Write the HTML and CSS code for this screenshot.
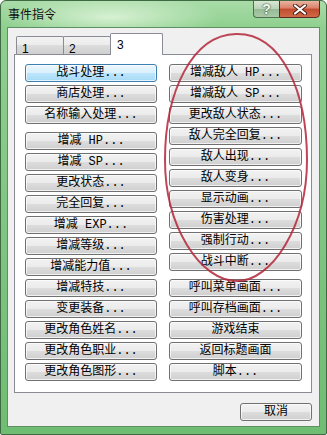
FILE: index.html
```html
<html>
<head>
    <title>事件指令</title>
    <link rel="stylesheet" href="styles.css">
</head>
<body>
    <div class="window">
        <div class="titlebar">
            <div class="title">事件指令</div>
            <div class="caption">
                <div class="cap help">?</div>
                <div class="cap close">
                    <svg width="16" height="11" viewBox="0 0 16 11">
                        <path d="M3 1.5 L13 9.5 M13 1.5 L3 9.5" stroke="#4a2018" stroke-width="4" stroke-linecap="round"/>
                        <path d="M3 1.5 L13 9.5 M13 1.5 L3 9.5" stroke="#ffffff" stroke-width="2.2" stroke-linecap="round"/>
                    </svg>
                </div>
            </div>
        </div>
        <div class="client">
            <div class="tabs">
                <div class="tab">1</div>
                <div class="tab">2</div>
                <div class="tab active">3</div>
            </div>
            <div class="panel">
                <div class="col">
                    <div class="button default">战斗处理...</div>
                    <div class="button">商店处理...</div>
                    <div class="button">名称输入处理...</div>
                    <div class="button sep">增减 HP...</div>
                    <div class="button">增减 SP...</div>
                    <div class="button">更改状态...</div>
                    <div class="button">完全回复...</div>
                    <div class="button">增减 EXP...</div>
                    <div class="button">增减等级...</div>
                    <div class="button">增减能力值...</div>
                    <div class="button">增减特技...</div>
                    <div class="button">变更装备...</div>
                    <div class="button">更改角色姓名...</div>
                    <div class="button">更改角色职业...</div>
                    <div class="button">更改角色图形...</div>
                </div>
                <div class="col wide">
                    <div class="button">增减敌人 HP...</div>
                    <div class="button">增减敌人 SP...</div>
                    <div class="button">更改敌人状态...</div>
                    <div class="button">敌人完全回复...</div>
                    <div class="button">敌人出现...</div>
                    <div class="button">敌人变身...</div>
                    <div class="button">显示动画...</div>
                    <div class="button">伤害处理...</div>
                    <div class="button">强制行动...</div>
                    <div class="button">战斗中断...</div>
                    <div class="button sep">呼叫菜单画面...</div>
                    <div class="button">呼叫存档画面...</div>
                    <div class="button">游戏结束</div>
                    <div class="button">返回标题画面</div>
                    <div class="button">脚本...</div>
                </div>
            </div>
            <div class="footer">
                <div class="button cancel">取消</div>
            </div>
        </div>
        <svg class="mark" width="327" height="435" viewBox="0 0 327 435">
            <path d="M236 34 C282 33 307 92 307 160 C307 226 272 281 237 281 C200 281 165 226 165 160 C165 92 192 35 236 34 Z"
                  fill="none" stroke="#b3263a" stroke-width="2" stroke-opacity="0.85"/>
        </svg>
    </div>
</body>
</html>
```

FILE: styles.css
```css
body {
    margin: 0;
    padding: 0;
    font-family: "Noto Sans CJK SC", sans-serif;
    font-size: 12px;
}
.window {
    position: relative;
    width: 327px;
    height: 435px;
    box-sizing: border-box;
    border: 1px solid #3f6a44;
    border-radius: 6px 6px 2px 2px;
    background:
        radial-gradient(ellipse 110px 22px at 110px 16px, rgba(235, 250, 230, 0.75), rgba(235, 250, 230, 0) 100%),
        linear-gradient(#a9dca8 0px, #8fd08f 26px, #7cc47f 60%, #6fbd73 100%);
    overflow: hidden;
}
.titlebar {
    display: flex;
    height: 26px;
}
.title {
    padding: 5px 0 0 7px;
    line-height: 16px;
    color: #111;
}
.caption {
    display: flex;
    margin-left: auto;
    margin-right: 6px;
    margin-top: -1px;
}
.cap {
    height: 18px;
    box-sizing: border-box;
    display: flex;
    justify-content: center;
    align-items: center;
}
.help {
    width: 26px;
    border: 1px solid #4f6f52;
    border-right: none;
    border-radius: 0 0 0 4px;
    background: linear-gradient(#d9e8d6, #b9d2b7 50%, #97b996 50%, #aacaa8);
    font-family: "Liberation Sans", sans-serif;
    font-size: 14px;
    font-weight: bold;
    color: #f4f8f4;
    text-shadow: 0 0 2px #38503a, 0 0 1px #38503a;
}
.close {
    width: 41px;
    border: 1px solid #5d2a22;
    border-radius: 0 0 4px 0;
    background: linear-gradient(#eab4a2, #d98068 45%, #c24a2d 50%, #cf6a48);
}
.client {
    height: 400px;
    margin: 0 6px;
    box-sizing: border-box;
    border: 1px solid #5f8f63;
    background-color: #f0f0f0;
}
.tabs {
    display: flex;
    align-items: flex-end;
    height: 21px;
    margin: 5px 0 0 8px;
}
.tab {
    width: 48px;
    height: 18px;
    box-sizing: border-box;
    border: 1px solid #898c95;
    border-bottom: none;
    margin-right: -1px;
    padding: 6px 0 0 5px;
    border-radius: 2px 2px 0 0;
    background: linear-gradient(#f3f3f3, #ebebeb 50%, #dcdcdc 50%, #cfcfcf);
    font-family: "Liberation Sans", sans-serif;
    font-size: 12px;
    line-height: 12px;
}
.tab.active {
    position: relative;
    z-index: 1;
    width: 53px;
    height: 22px;
    margin-bottom: -1px;
    padding-top: 5px;
    padding-left: 6px;
    background: #ffffff;
}
.panel {
    display: flex;
    gap: 12px;
    width: 298px;
    height: 339px;
    box-sizing: border-box;
    margin-left: 6px;
    padding: 9px 0 0 10px;
    border: 1px solid #898c95;
    background-color: #ffffff;
}
.col {
    display: flex;
    flex-direction: column;
    gap: 3px;
    width: 132px;
}
.col.wide {
    width: 133px;
}
.button {
    height: 18px;
    box-sizing: border-box;
    border: 1px solid #707070;
    border-radius: 3px;
    background: linear-gradient(#f2f2f2, #ebebeb 50%, #dddddd 50%, #cfcfcf);
    box-shadow: inset 0 0 0 1px rgba(255, 255, 255, 0.7);
    display: flex;
    justify-content: center;
    align-items: center;
    font-family: "Liberation Mono", "Noto Sans CJK SC", monospace;
    font-size: 12px;
    line-height: 16px;
    color: #000;
    white-space: pre;
    cursor: default;
}
.button.default {
    border-color: #3c7fb1;
    background: linear-gradient(#eaf6fd, #d9f0fc 50%, #bee6fd 50%, #a7d9f5);
}
.button.sep {
    margin-top: 5px;
}
.footer {
    display: flex;
    justify-content: flex-end;
    padding: 10px 7px 0 0;
}
.button.cancel {
    width: 72px;
}
.mark {
    position: absolute;
    left: -1px;
    top: -1px;
    pointer-events: none;
}
```
